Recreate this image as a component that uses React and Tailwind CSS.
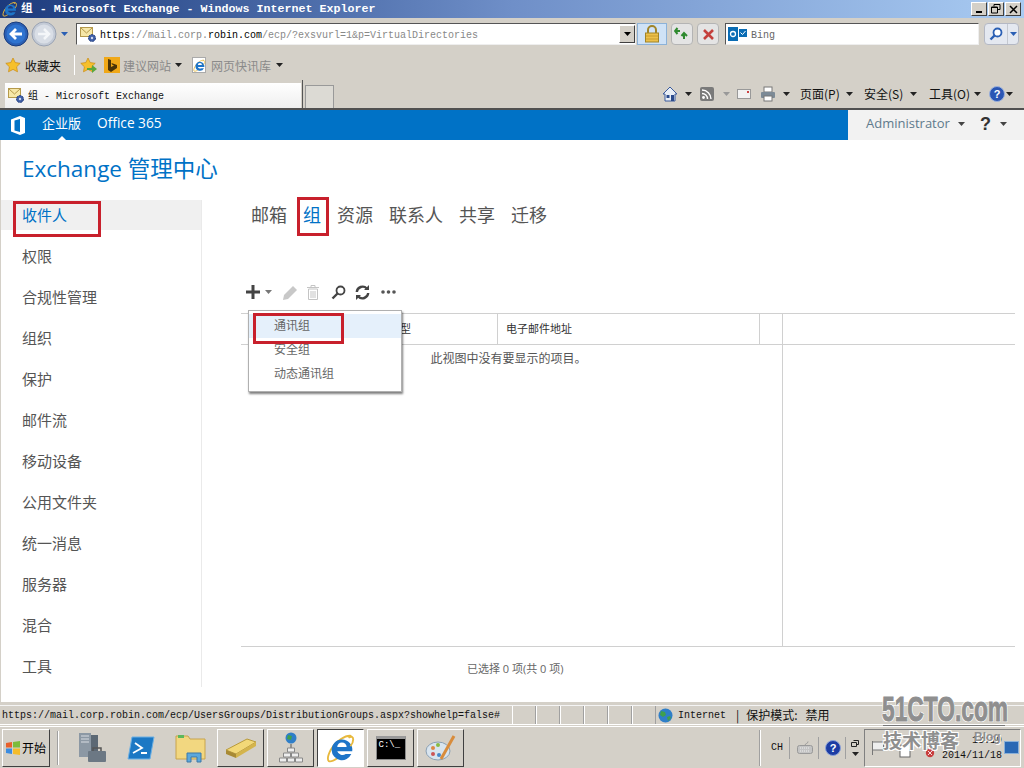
import React from 'react';

const mono = 'font-["Liberation_Mono","Noto_Sans_CJK_SC",monospace]';
const ui = 'font-["Open_Sans","Noto_Sans_CJK_SC",sans-serif]';
const cjk = 'font-["Noto_Sans_CJK_SC",sans-serif]';

const Caret = ({ className = '', color = '#222' }) => (
  <svg width="7" height="4" viewBox="0 0 7 4" className={className}><path d="M0 0h7L3.5 4z" fill={color} /></svg>
);

const IeIcon = ({ size = 16, dim }) => (
  <svg width={size} height={size} viewBox="0 0 32 32" className="shrink-0">
    <path d="M27 3c-6 -1-16 5-22 15C2 24 1 28 3 30c2 1 6-1 9-3" fill="none" stroke="#e8b93c" strokeWidth="2" />
    <path d="M17 7a11 11 0 0 0-11 11.500a11 11 0 0 0 21 4h-6a6 6 0 0 1-9-3h16a11 11 0 0 0-11-12.500zM12 15a5 5 0 0 1 10 0z" fill={dim ? '#5a8fd0' : '#1d74c8'} />
    <path d="M24 5c3-2 5-1 5 2s-2 6-3 7" fill="none" stroke="#e8b93c" strokeWidth="2" />
  </svg>
);

const MailGear = () => (
  <svg width="17" height="17" viewBox="0 0 17 17" className="shrink-0">
    <rect x="0.500" y="1.500" width="12" height="9" fill="#f6e7a8" stroke="#b59a4c" />
    <path d="M1 2l5.500 5L12 2" fill="none" stroke="#b59a4c" />
    <circle cx="12" cy="12" r="3.500" fill="#3f5fa8" stroke="#26407c" strokeDasharray="2 1" />
    <circle cx="12" cy="12" r="1.200" fill="#cfd9ee" />
  </svg>
);

const Star = ({ size = 16 }) => (
  <svg width={size} height={size} viewBox="0 0 16 16" className="shrink-0">
    <path d="M8 1l2.200 4.600 5 .7-3.600 3.500.9 5L8 12.400 3.500 14.800l.9-5L.8 6.300l5-.7z" fill="#f6c02c" stroke="#c98a12" strokeWidth=".7" />
  </svg>
);

const NavCircle = ({ forward }) => (
  <svg width="26" height="26" viewBox="0 0 26 26" className="shrink-0">
    <circle cx="13" cy="13" r="12" fill={forward ? '#c3cad6' : '#2a5fb4'} stroke={forward ? '#9aa3b2' : '#1a3c7c'} />
    <circle cx="13" cy="13" r="9.500" fill={forward ? '#d9dee6' : '#2f74d0'} />
    {forward
      ? <path d="M7 13h10M13 8l5 5-5 5" fill="none" stroke="#f4f6f9" strokeWidth="2.500" />
      : <path d="M19 13H9M13 8l-5 5 5 5" fill="none" stroke="#fff" strokeWidth="2.800" />}
  </svg>
);

const WinBtn = ({ children }) => (
  <div className="w-[16px] h-[14px] bg-[#d4d0c8] border border-t-white border-l-white border-r-[#404040] border-b-[#404040] flex items-center justify-center">
    {children}
  </div>
);

const TitleBar = () => (
  <div className="h-[18px] shrink-0 flex items-center pl-[2px] pr-[2px] bg-gradient-to-r from-[#1c3a7c] via-[#6f8fc8] to-[#a9cbf2]">
    <IeIcon size={16} />
    <span className={`${mono} ml-[3px] pt-[1px] text-white font-bold text-[11.670px] whitespace-pre leading-none`}>组 - Microsoft Exchange - Windows Internet Explorer</span>
    <div className="ml-auto flex gap-[1px] mr-[1px]">
      <WinBtn><div className="w-[6px] h-[2px] bg-black mt-[6px]" /></WinBtn>
      <WinBtn>
        <svg width="10" height="10" viewBox="0 0 10 10"><path d="M3 .500h6v5H7M3 .500v2M.500 3h6v6h-6z M.500 3.500h6" fill="none" stroke="#000" /></svg>
      </WinBtn>
      <WinBtn>
        <svg width="9" height="9" viewBox="0 0 9 9"><path d="M1 1l7 7M8 1L1 8" stroke="#000" strokeWidth="1.500" /></svg>
      </WinBtn>
    </div>
  </div>
);

const AddressBar = () => (
  <div className="h-[32px] shrink-0 flex items-center pl-[3px]">
    <NavCircle />
    <div className="ml-[2px]"><NavCircle forward /></div>
    <Caret className="ml-[4px]" color="#2a5fb4" />
    <div className="ml-[8px] w-[560px] h-[22px] bg-white border border-t-[#555] border-l-[#555] border-r-[#eee] border-b-[#eee] flex items-center pl-[3px]">
      <MailGear />
      <span className={`${mono} ml-[3px] pt-[2px] text-[10px] text-[#888] whitespace-pre`}><span className="text-black">https</span>://mail.corp.<span className="text-black">robin.com</span>/ecp/?exsvurl=1&p=VirtualDirectories</span>
      <div className="ml-auto w-[16px] h-[18px] bg-[#d4d0c8] border border-t-white border-l-white border-r-[#404040] border-b-[#404040] flex items-center justify-center">
        <Caret color="#000" />
      </div>
    </div>
    <div className="ml-[1px] w-[30px] h-[22px] bg-[#cfe2f6] border border-[#8cb2d8] flex items-center justify-center">
      <svg width="16" height="18" viewBox="0 0 16 18"><path d="M4 8V5a4 4 0 0 1 8 0v3" fill="none" stroke="#a08428" strokeWidth="2" /><rect x="1.500" y="8" width="13" height="9" fill="#ecc04a" stroke="#a08428" /><path d="M2 11h12M2 14h12" stroke="#c89c2c" /></svg>
    </div>
    <div className="ml-[4px] w-[22px] h-[22px] rounded-[4px] bg-[#e4e4e4] border border-[#b4b4b4] flex items-center justify-center">
      <svg width="16" height="14" viewBox="0 0 16 14"><path d="M6 4H1M3.500 1L1 4l2.500 3M10 6v6M7.500 9l2.500-3 3 3" fill="none" stroke="#2f8a2f" strokeWidth="2" /></svg>
    </div>
    <div className="ml-[4px] w-[22px] h-[22px] rounded-[4px] bg-[#e4e4e4] border border-[#b4b4b4] flex items-center justify-center">
      <svg width="13" height="13" viewBox="0 0 13 13"><path d="M2 2l9 9M11 2l-9 9" stroke="#c4403c" strokeWidth="2.600" /></svg>
    </div>
    <div className="ml-[6px] w-[254px] h-[22px] bg-white border border-t-[#555] border-l-[#555] border-r-[#eee] border-b-[#eee] flex items-center pl-[2px]">
      <svg width="20" height="14" viewBox="0 0 20 14" className="shrink-0"><rect x="0" y="0" width="10" height="14" fill="#0a6cb4" /><circle cx="5" cy="7" r="2.500" fill="none" stroke="#fff" strokeWidth="1.300" /><rect x="11" y="2" width="8" height="8" fill="#0a6cb4" /><path d="M12.500 5.500l2 2 3-3.500" fill="none" stroke="#fff" /></svg>
      <span className={`${mono} ml-[3px] pt-[2px] text-[10px] text-[#666]`}>Bing</span>
    </div>
    <div className="ml-[5px] w-[35px] h-[22px] rounded-[4px] bg-[#e4e8f0] border border-[#b4b8c4] flex items-center">
      <div className="w-[22px] flex justify-center">
        <svg width="14" height="14" viewBox="0 0 14 14"><circle cx="8.500" cy="5.500" r="4" fill="#fff" stroke="#2a5fb4" strokeWidth="1.800" /><path d="M5.500 8.500L1.500 12.500" stroke="#2a5fb4" strokeWidth="2.400" /></svg>
      </div>
      <div className="h-full border-l border-[#c4c8d0] flex-1 flex items-center justify-center">
        <Caret color="#2a5fb4" />
      </div>
    </div>
  </div>
);

const FavBar = () => (
  <div className={`${cjk} h-[30px] shrink-0 flex items-center pl-[5px] text-[12px]`}>
    <Star />
    <span className="ml-[4px] pt-[1px] text-[#111] w-[37px] whitespace-nowrap">收藏夹</span>
    <div className="ml-[12px] w-[1px] h-[20px] bg-[#a0a0a0] border-r border-white" />
    <div className="ml-[5px] relative"><Star />
      <svg width="10" height="8" viewBox="0 0 10 8" className="absolute -right-[1px] bottom-0"><path d="M0 3h5V0l5 4-5 4V5H0z" fill="#5aa83c" /></svg>
    </div>
    <div className="ml-[8px] w-[16px] h-[16px] bg-[#f0a818] flex items-center justify-center">
      <svg width="10" height="13" viewBox="0 0 10 13"><path d="M1 0l3 1v7l3-1.500-2-1 -.5-1.500 5.500 2v3L4 13 1 11z" fill="#4a3408" /></svg>
    </div>
    <span className="ml-[3px] pt-[1px] text-[#8a8a8a] w-[48px] whitespace-nowrap">建议网站</span>
    <Caret className="ml-[4px]" />
    <div className="ml-[10px] w-[14px] h-[16px] bg-white border border-[#aaa] flex items-center justify-center"><IeIcon size={13} /></div>
    <span className="ml-[5px] pt-[1px] text-[#8a8a8a] w-[61px] whitespace-nowrap">网页快讯库</span>
    <Caret className="ml-[4px]" />
  </div>
);

const CmdLabel = ({ children, className = '' }) => (
  <span className={`${cjk} text-[12px] text-[#111] w-[42px] whitespace-nowrap ${className}`}>{children}</span>
);

const TabBar = () => (
  <div className="h-[28px] shrink-0 flex items-end pl-[5px] border-b-0">
    <div className="w-[296px] h-[25px] bg-gradient-to-b from-white to-[#efefef] flex items-center pl-[3px] pb-[1px]">
      <MailGear />
      <span className={`${mono} ml-[3px] pt-[2px] text-[10px] text-[#111] whitespace-pre`}>组 - Microsoft Exchange</span>
    </div>
    <div className="w-[1px] h-[28px] bg-[#555] ml-[1px]" />
    <div className="ml-[2px] w-[29px] h-[23px] border border-b-0 border-[#999] bg-[#dcdad4]" />
    <div className="ml-[328px] h-full flex items-center pb-[0px]">
      <svg width="16" height="16" viewBox="0 0 16 16" className="shrink-0"><path d="M8 1L1 8h2v7h10V8h2z" fill="#e8eef6" stroke="#3a5a9c" /><rect x="9" y="9" width="3" height="6" fill="#2a4a8c" /><rect x="4.500" y="9" width="3" height="3" fill="#2a4a8c" /></svg>
      <Caret className="ml-[7px]" />
      <div className="ml-[8px] w-[14px] h-[14px] bg-[#7a7a7a] rounded-[2px] flex items-center justify-center">
        <svg width="10" height="10" viewBox="0 0 10 10"><circle cx="1.500" cy="8.500" r="1.400" fill="#fff" /><path d="M0 4.500a5.500 5.500 0 0 1 5.500 5.500M0 1a9 9 0 0 1 9 9" fill="none" stroke="#fff" strokeWidth="1.400" /></svg>
      </div>
      <Caret className="ml-[9px]" color="#999" />
      <div className="ml-[7px] w-[14px] h-[10px] bg-[#f2f2f2] border border-[#999] relative">
        <div className="absolute right-[1px] top-[1px] w-[2px] h-[2px] bg-[#c44]" />
      </div>
      <svg width="16" height="16" viewBox="0 0 16 16" className="ml-[9px] shrink-0"><rect x="4" y="1" width="8" height="5" fill="#fff" stroke="#777" /><rect x="1" y="6" width="14" height="6" rx="1" fill="#7c8a96" /><rect x="4" y="10" width="8" height="5" fill="#fff" stroke="#777" /></svg>
      <Caret className="ml-[7px]" />
      <CmdLabel className="ml-[10px]">页面(P)</CmdLabel>
      <Caret className="ml-[4px]" />
      <CmdLabel className="ml-[11px]">安全(S)</CmdLabel>
      <Caret className="ml-[4px]" />
      <CmdLabel className="ml-[12px]">工具(O)</CmdLabel>
      <Caret className="ml-[3px]" />
      <svg width="16" height="16" viewBox="0 0 16 16" className="ml-[8px] shrink-0"><circle cx="8" cy="8" r="7.500" fill="#2a56b4" stroke="#9ab0dc" /><text x="8" y="12" textAnchor="middle" fontSize="11" fontWeight="bold" fill="#fff" fontFamily="Liberation Sans">?</text></svg>
      <Caret className="ml-[1px]" />
    </div>
  </div>
);

const BlueBar = () => (
  <div className={`${ui} h-[30px] shrink-0 bg-[#0072c6] flex items-stretch relative`}>
    <div className="ml-[10px] flex items-center">
      <svg width="16" height="19" viewBox="0 0 16 19"><path d="M1 3.500L10 0l5 2v15l-5 2-9-3.500zM10 3L4.500 4.500v10L10 16z" fill="#fff" fillRule="evenodd" /></svg>
    </div>
    <span className="ml-[16px] self-center pb-[3px] text-[13px] text-white">企业版</span>
    <span className="ml-[16px] self-center pb-[3px] text-[13.700px] text-white">Office 365</span>
    <div className="absolute left-[58px] bottom-0 w-0 h-0 border-x-[4px] border-x-transparent border-b-[4px] border-b-white" />
    <div className="ml-auto w-[176px] bg-[#f2f2f2] flex items-center pl-[18px] pb-[2px]">
      <span className="text-[13px] text-[#5f7a8c]">Administrator</span>
      <Caret className="ml-[8px]" color="#444" />
      <span className="ml-[15px] text-[18px] font-bold text-[#333] font-['Liberation_Sans']">?</span>
      <Caret className="ml-[9px]" color="#444" />
    </div>
  </div>
);

const sideItems = ['收件人', '权限', '合规性管理', '组织', '保护', '邮件流', '移动设备', '公用文件夹', '统一消息', '服务器', '混合', '工具'];

const Sidebar = () => (
  <div className="w-[201px] shrink-0 border-r border-[#eaeaea] mt-[4px] h-[487px]">
    {sideItems.map((item, i) => (
      <div key={item} className={`h-[30px] mb-[11px] pl-[21px] pt-[1px] flex items-center text-[15px] ${i === 0 ? 'bg-[#f0f0f0] text-[#0072c6]' : 'text-[#555]'}`}>
        {item}
      </div>
    ))}
  </div>
);

const Toolbar = () => (
  <div className="h-[20px] mt-[52px] ml-[5px] flex items-center">
    <svg width="14" height="14" viewBox="0 0 14 14"><path d="M5.500 0h3v5.500H14v3H8.500V14h-3V8.500H0v-3h5.500z" fill="#444" /></svg>
    <Caret className="ml-[5px]" color="#777" />
    <svg width="17" height="17" viewBox="0 0 17 17" className="ml-[10px]"><path d="M1 16l1-5L11 2l4 4-9 9z" fill="#c8c8c8" /></svg>
    <svg width="14" height="15" viewBox="0 0 14 15" className="ml-[7px]"><path d="M1 2.500h12M5 2V.500h4V2M2.500 4v10.500h9V4zM5 6v7M7 6v7M9 6v7" fill="none" stroke="#c4c4c4" /></svg>
    <svg width="15" height="15" viewBox="0 0 15 15" className="ml-[11px]"><circle cx="9.500" cy="5.500" r="4" fill="none" stroke="#444" strokeWidth="1.800" /><path d="M6.500 8.500L1.500 13.500" stroke="#444" strokeWidth="2.400" /></svg>
    <svg width="15" height="15" viewBox="0 0 15 15" className="ml-[9px]"><path d="M1.800 7a5.800 5.800 0 0 1 10-3.500M13.200 8a5.800 5.800 0 0 1-10 3.500" fill="none" stroke="#444" strokeWidth="2.400" /><path d="M9 5h5V0zM6 10H1v5z" fill="#444" /></svg>
    <svg width="15" height="4" viewBox="0 0 15 4" className="ml-[11px]"><circle cx="2" cy="2" r="1.800" fill="#555" /><circle cx="7.500" cy="2" r="1.800" fill="#555" /><circle cx="13" cy="2" r="1.800" fill="#555" /></svg>
  </div>
);

const GroupsPanel = () => (
  <div className="flex-1 min-w-0 flex flex-col relative">
    <div className="h-[30px] mt-[4px] ml-[10px] flex items-center text-[18px] text-[#555]">
      <span>邮箱</span>
      <span className="ml-[16px] text-[#0072c6]">组</span>
      <span className="ml-[16px]">资源</span>
      <span className="ml-[16px]">联系人</span>
      <span className="ml-[16px]">共享</span>
      <span className="ml-[16px]">迁移</span>
    </div>
    <Toolbar />
    <div className="mt-[11px] mr-[9px] h-[334px] border-b border-[#d0d0d0] flex">
      <div className="w-[542px] border-r border-[#d0d0d0] flex flex-col">
        <div className="h-[32px] border-y border-[#d0d0d0] flex text-[11px] text-[#333]">
          <div className="w-[257px] border-r border-[#d0d0d0] flex items-center pl-[104px]">显示名称类型</div>
          <div className="w-[262px] border-r border-[#d0d0d0] flex items-center pl-[8px]">电子邮件地址</div>
        </div>
        <div className="pt-[5px] pr-[6px] text-center text-[12px] text-[#555]">此视图中没有要显示的项目。</div>
      </div>
      <div className="flex-1 h-[32px] border-y border-[#d0d0d0]" />
    </div>
    <div className="mt-[14px] text-[11px] text-[#666] pl-[226px]">已选择 0 项(共 0 项)</div>

    {/* dropdown of the + button */}
    <div className="absolute left-[7px] top-[114px] w-[154px] h-[82px] bg-white border border-[#b0b0b0] shadow-[1px_2px_2px_rgba(0,0,0,0.5)] pt-[3px] text-[12px] text-[#666]">
      <div className="h-[24px] bg-[#e5f0fb] pl-[25px] flex items-center">通讯组</div>
      <div className="h-[24px] pl-[25px] flex items-center">安全组</div>
      <div className="h-[24px] pl-[25px] flex items-center">动态通讯组</div>
    </div>
  </div>
);

const TaskBtn = ({ children, active }) => (
  <div className={`w-[47px] h-[38px] mr-[3px] flex items-center justify-center border ${active ? 'bg-white border-t-[#404040] border-l-[#404040] border-r-white border-b-white' : 'bg-[#d4d0c8] border-t-white border-l-white border-r-[#404040] border-b-[#404040]'}`}>
    {children}
  </div>
);

const StatusBar = () => (
  <div className="h-[24px] shrink-0 pt-[3px] pb-[1px]">
    <div className="h-[20px] border-y border-t-[#f4f4f4] border-b-white flex items-center">
      <span className={`${mono} w-[512px] pl-[2px] text-[10px] text-[#111] whitespace-pre`}>https://mail.corp.robin.com/ecp/UsersGroups/DistributionGroups.aspx?showhelp=false#</span>
      {[0, 1, 2, 3, 4, 5].map(i => (
        <div key={i} className="w-[24px] h-[18px] border-r border-[#a0a0a0] border-l border-l-white" />
      ))}
      <svg width="15" height="15" viewBox="0 0 15 15" className="ml-[2px] shrink-0"><circle cx="7.500" cy="7.500" r="7" fill="#2f7ec8" /><path d="M3 3l4 1 1 3-3 2-3-2zM9 9l3-1 1 2-3 3z" fill="#3fa04c" /></svg>
      <span className={`${mono} ml-[5px] text-[10px] text-[#111] whitespace-pre`}>Internet</span>
      <span className={`${cjk} ml-[10px] text-[12px] text-[#111]`}>|</span>
      <span className={`${cjk} ml-[7px] text-[12px] text-[#111]`}>保护模式:</span>
      <span className={`${cjk} ml-[8px] text-[12px] text-[#111]`}>禁用</span>
    </div>
  </div>
);

const Taskbar = () => (
  <div className="flex-1 flex items-center pl-[2px] border-t border-white">
    <div className={`${cjk} w-[48px] h-[38px] border border-t-white border-l-white border-r-[#404040] border-b-[#404040] flex items-center pl-[2px] text-[12px] text-black`}>
      <svg width="16" height="16" viewBox="0 0 16 16" className="shrink-0"><path d="M1 3l6-1v5.500H1z" fill="#e8602c" /><path d="M8 2l7-1v6.500H8z" fill="#7cbc3c" /><path d="M1 8.500h6V14l-6-1z" fill="#3c8ce0" /><path d="M8 8.500h7V15l-7-1z" fill="#f4bc2c" /></svg>
      <span className="ml-[1px]">开始</span>
    </div>
    <div className="ml-[7px] w-[2px] h-[34px] bg-[#a0a0a0] border-r border-white" />
    <svg width="30" height="30" viewBox="0 0 30 30" className="ml-[18px] shrink-0"><rect x="2" y="0" width="12" height="24" fill="#8c98a4" /><rect x="14" y="2" width="7" height="16" fill="#5c6874" /><path d="M4 3h8M4 6h8M4 9h8" stroke="#d8dce2" /><rect x="11" y="18" width="18" height="11" rx="1" fill="#6c7884" /><path d="M16 18v-3h8v3" fill="none" stroke="#555" strokeWidth="1.500" /></svg>
    <svg width="28" height="24" viewBox="0 0 28 24" className="ml-[20px] shrink-0"><path d="M5 1h22l-4 22H1z" fill="#1c78c4" stroke="#6cb0e4" /><path d="M8 7l7 5-9 5M14 17h6" fill="none" stroke="#fff" strokeWidth="1.800" /></svg>
    <svg width="32" height="30" viewBox="0 0 32 30" className="ml-[20px] shrink-0"><path d="M1 3h12l2 3h15v20H1z" fill="#f2d780" stroke="#c8a44c" /><path d="M3 2h6v3H3z" fill="#5cb85c" /><path d="M12 20h14v9H22v-5h-6v5h-4z" fill="#5ca8dc" stroke="#3c78a8" /></svg>
    <div className="ml-[10px] flex">
      <TaskBtn>
        <svg width="32" height="22" viewBox="0 0 32 22"><path d="M1 13L22 2l9 3-20 12z" fill="#f2d878" stroke="#b89a3c" /><path d="M1 13l10 4v4L1 17z" fill="#a88a34" /><path d="M11 17L31 5v4L11 21z" fill="#d4b44c" /></svg>
      </TaskBtn>
      <TaskBtn>
        <svg width="26" height="32" viewBox="0 0 26 32"><circle cx="13" cy="6" r="5.500" fill="#2f7ec8" /><path d="M10 3l4 1-1 4-4-1z" fill="#3fa04c" /><path d="M13 12v4" stroke="#555" /><path d="M9.500 16h7v4h-7zM5.500 21h7v4h-7zM13.500 21h7v4h-7zM1.500 26h7v4h-7zM9.500 26h7v4h-7zM17.500 26h7v4h-7z" fill="#eee" stroke="#888" /></svg>
      </TaskBtn>
      <TaskBtn active><IeIcon size={30} /></TaskBtn>
      <TaskBtn>
        <div className="w-[30px] h-[24px] bg-black border-t-[3px] border-[#8a8a8a] border border-t-[#9a9a9a] pl-[2px]">
          <span className="block text-[9px] leading-[12px] text-white font-['Liberation_Mono']">C:\_</span>
        </div>
      </TaskBtn>
      <TaskBtn>
        <svg width="32" height="30" viewBox="0 0 32 30"><ellipse cx="13" cy="18" rx="12" ry="9" fill="#d8e4ee" stroke="#8aa0b4" /><circle cx="8" cy="15" r="2" fill="#d84" /><circle cx="13" cy="12" r="2" fill="#8b4" /><circle cx="8" cy="21" r="2" fill="#c55" /><circle cx="14" cy="22" r="2" fill="#48c" /><path d="M16 26L29 3" stroke="#d88c3c" strokeWidth="3" /></svg>
      </TaskBtn>
    </div>

    <div className="ml-[292px] w-[2px] h-[36px] bg-[#a0a0a0] border-r border-white" />
    <span className={`${mono} ml-[10px] text-[10px] text-[#111]`}>CH</span>
    <div className="ml-[6px] w-[1px] h-[22px] bg-[#a0a0a0]" />
    <svg width="16" height="13" viewBox="0 0 16 13" className="ml-[7px] shrink-0"><path d="M8 4.500C8 2 11 3 11 .500" fill="none" stroke="#999" /><rect x=".500" y="4.500" width="15" height="8" rx="2" fill="#c4c4c4" stroke="#999" /><path d="M3 7h10M3 10h10" stroke="#eee" strokeDasharray="1 1" /></svg>
    <div className="ml-[5px] w-[1px] h-[22px] bg-[#a0a0a0]" />
    <svg width="16" height="16" viewBox="0 0 16 16" className="ml-[6px] shrink-0"><circle cx="8" cy="8" r="7.500" fill="#1c3ca4" stroke="#8aa0d8" /><text x="8" y="12" textAnchor="middle" fontSize="11" fontWeight="bold" fill="#fff" fontFamily="Liberation Sans">?</text></svg>
    <div className="ml-[4px] w-[1px] h-[22px] bg-[#a0a0a0]" />
    <div className="ml-[5px] w-[8px] flex flex-col items-center gap-[5px]">
      <svg width="8" height="7" viewBox="0 0 8 7"><path d="M2.500.500h5v4H5M.500 2.500h5v4h-5z" fill="none" stroke="#222" /></svg>
      <Caret color="#222" />
    </div>
    <div className="ml-[5px] w-[157px] h-[38px] border border-t-[#808080] border-l-[#808080] border-r-white border-b-white flex items-center relative">
      <svg width="12" height="14" viewBox="0 0 12 14" className="ml-[7px]"><path d="M.500 0v14M.500 1h11v8h-11" fill="#eee" stroke="#777" /></svg>
      <svg width="12" height="14" viewBox="0 0 12 14" className="ml-[15px] mt-[6px]"><rect x="1" y="1" width="10" height="12" fill="#fff" stroke="#666" /></svg>
      <svg width="10" height="10" viewBox="0 0 12 12" className="ml-[14px] mt-[10px]"><circle cx="6" cy="6" r="5" fill="#c83c3c" /><path d="M3.500 3.500l5 5M8.500 3.500l-5 5" stroke="#fff" /></svg>
      <div className={`${mono} ml-auto text-[10px] leading-[15px] text-[#111] text-right`}>
        <div>13:19</div>
        <div>2014/11/18</div>
      </div>
      <div className="ml-[2px] mr-[1px] w-[15px] h-[13px] bg-[#2a68b4] border border-[#8ab0d8]" />
    </div>
  </div>
);

export default function App() {
  return (
    <div className={`${ui} w-[1024px] h-[768px] flex flex-col bg-[#d4d0c8] relative overflow-hidden`}>
      <TitleBar />
      <AddressBar />
      <FavBar />
      <TabBar />
      <div className="h-[2px] shrink-0 bg-[#505050]" />
      <BlueBar />
      <div className="h-[562px] shrink-0 bg-white flex flex-col border-l-[1px] border-[#d4d0c8]">
        <div className={`${ui} h-[56px] shrink-0 pl-[21px] pt-[12px] text-[22.500px] leading-[34px] text-[#0072c6]`}>Exchange 管理中心</div>
        <div className="flex flex-1 min-h-0">
          <Sidebar />
          <div className="w-[39px] shrink-0" />
          <GroupsPanel />
        </div>
      </div>
      <StatusBar />
      <Taskbar />

      {/* red annotation boxes drawn on the screenshot */}
      <div className="absolute left-[13px] top-[201px] w-[88px] h-[36px] border-[3px] border-[#c8202c]" />
      <div className="absolute left-[297px] top-[197px] w-[32px] h-[39px] border-[3px] border-[#c8202c]" />
      <div className="absolute left-[253px] top-[313px] w-[91px] h-[31px] border-[3px] border-[#c8202c]" />

      {/* blog watermark */}
      <div className="absolute left-[882px] top-[689px] origin-left scale-x-[0.65] text-[35px] font-bold leading-[40px] whitespace-nowrap text-[#8f8f8f] font-['Liberation_Sans'] [-webkit-text-stroke:1px_#8f8f8f] [text-shadow:1px_1px_0_#fff,-1px_-1px_0_#fff,1px_-1px_0_#fff,-1px_1px_0_#fff]">51CTO.com</div>
      <div className={`${cjk} absolute left-[883px] top-[727px] text-[19px] font-bold leading-[26px] text-[#8f8f8f] [text-shadow:1px_1px_0_#fff,-1px_-1px_0_#fff,1px_-1px_0_#fff,-1px_1px_0_#fff]`}>技术博客</div>
      <div className="absolute left-[974px] top-[730px] text-[12px] font-bold leading-[14px] text-[#8f8f8f] font-['Liberation_Sans'] [text-shadow:1px_1px_0_#fff]">Blog</div>
      <div className="absolute left-[883px] top-[725px] w-[122px] h-[1px] bg-[#777]" />
    </div>
  );
}
